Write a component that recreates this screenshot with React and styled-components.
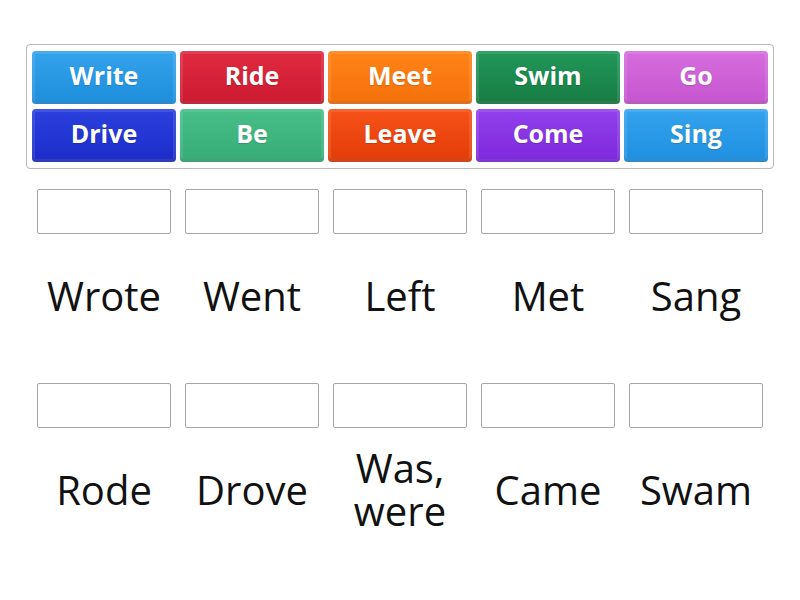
import React from "react";
import styled, { createGlobalStyle } from "styled-components";

const Global = createGlobalStyle`
  html, body { margin: 0; padding: 0; background: #fff; }
  body { font-family: "Open Sans", "Liberation Sans", sans-serif; }
`;

const Page = styled.div`
  width: 800px;
  height: 600px;
  box-sizing: border-box;
  padding: 44px 26px 0 26px;
`;

const Bank = styled.div`
  box-sizing: border-box;
  width: 748px;
  border: 1px solid #b9b9b9;
  border-radius: 4px;
  padding: 6px 5px 6px 5px;
  display: grid;
  grid-template-columns: repeat(5, 144px);
  column-gap: 4px;
  row-gap: 5px;
`;

const Tile = styled.div`
  height: 53px;
  border-radius: 4px;
  background: linear-gradient(to bottom, ${(p) => p.$top}, ${(p) => p.$bot});
  box-shadow: inset 0 0 0 3px rgba(255, 255, 255, 0.1),
    inset 0 -3px 0 rgba(0, 0, 0, 0.12);
  color: #fff;
  font-weight: 700;
  font-size: 25px;
  display: flex;
  align-items: center;
  justify-content: center;
  text-shadow: 0 1px 1px rgba(0, 0, 0, 0.15);
  padding-bottom: 5px;
  box-sizing: border-box;
`;

const Targets = styled.div`
  display: grid;
  grid-template-columns: repeat(5, 144px);
  column-gap: 4px;
  padding: 20px 5px 0 6px;
  row-gap: 27px;
`;

const Slot = styled.div`
  display: flex;
  flex-direction: column;
  align-items: center;
`;

const Box = styled.div`
  box-sizing: border-box;
  width: 134px;
  height: 45px;
  border: 1px solid #a6a6a6;
  border-radius: 2px;
  background: #fff;
`;

const Label = styled.div`
  height: 122px;
  display: flex;
  align-items: center;
  justify-content: center;
  text-align: center;
  font-size: 40px;
  line-height: 43px;
  color: #111;
  width: 144px;
`;

const tiles = [
  ["Write", "#34a3ec", "#1d8edb"],
  ["Ride", "#e02a40", "#cc1a30"],
  ["Meet", "#ff8418", "#f4700a"],
  ["Swim", "#22975a", "#177c42"],
  ["Go", "#d66ddd", "#c655d0"],
  ["Drive", "#2b40de", "#1c2cc8"],
  ["Be", "#48bf88", "#36ab75"],
  ["Leave", "#f65218", "#e23c08"],
  ["Come", "#9240ec", "#7d28dc"],
  ["Sing", "#34a3ee", "#1e90e0"],
];

const labels = [
  "Wrote",
  "Went",
  "Left",
  "Met",
  "Sang",
  "Rode",
  "Drove",
  ["Was,", "were"],
  "Came",
  "Swam",
];

export default function App() {
  return (
    <Page>
      <Global />
      <Bank>
        {tiles.map(([t, a, b]) => (
          <Tile key={t} $top={a} $bot={b}>
            {t}
          </Tile>
        ))}
      </Bank>
      <Targets>
        {labels.map((l, i) => (
          <Slot key={i}>
            <Box />
            <Label>
              {Array.isArray(l) ? (
                <span>
                  {l[0]}
                  <br />
                  {l[1]}
                </span>
              ) : (
                l
              )}
            </Label>
          </Slot>
        ))}
      </Targets>
    </Page>
  );
}
